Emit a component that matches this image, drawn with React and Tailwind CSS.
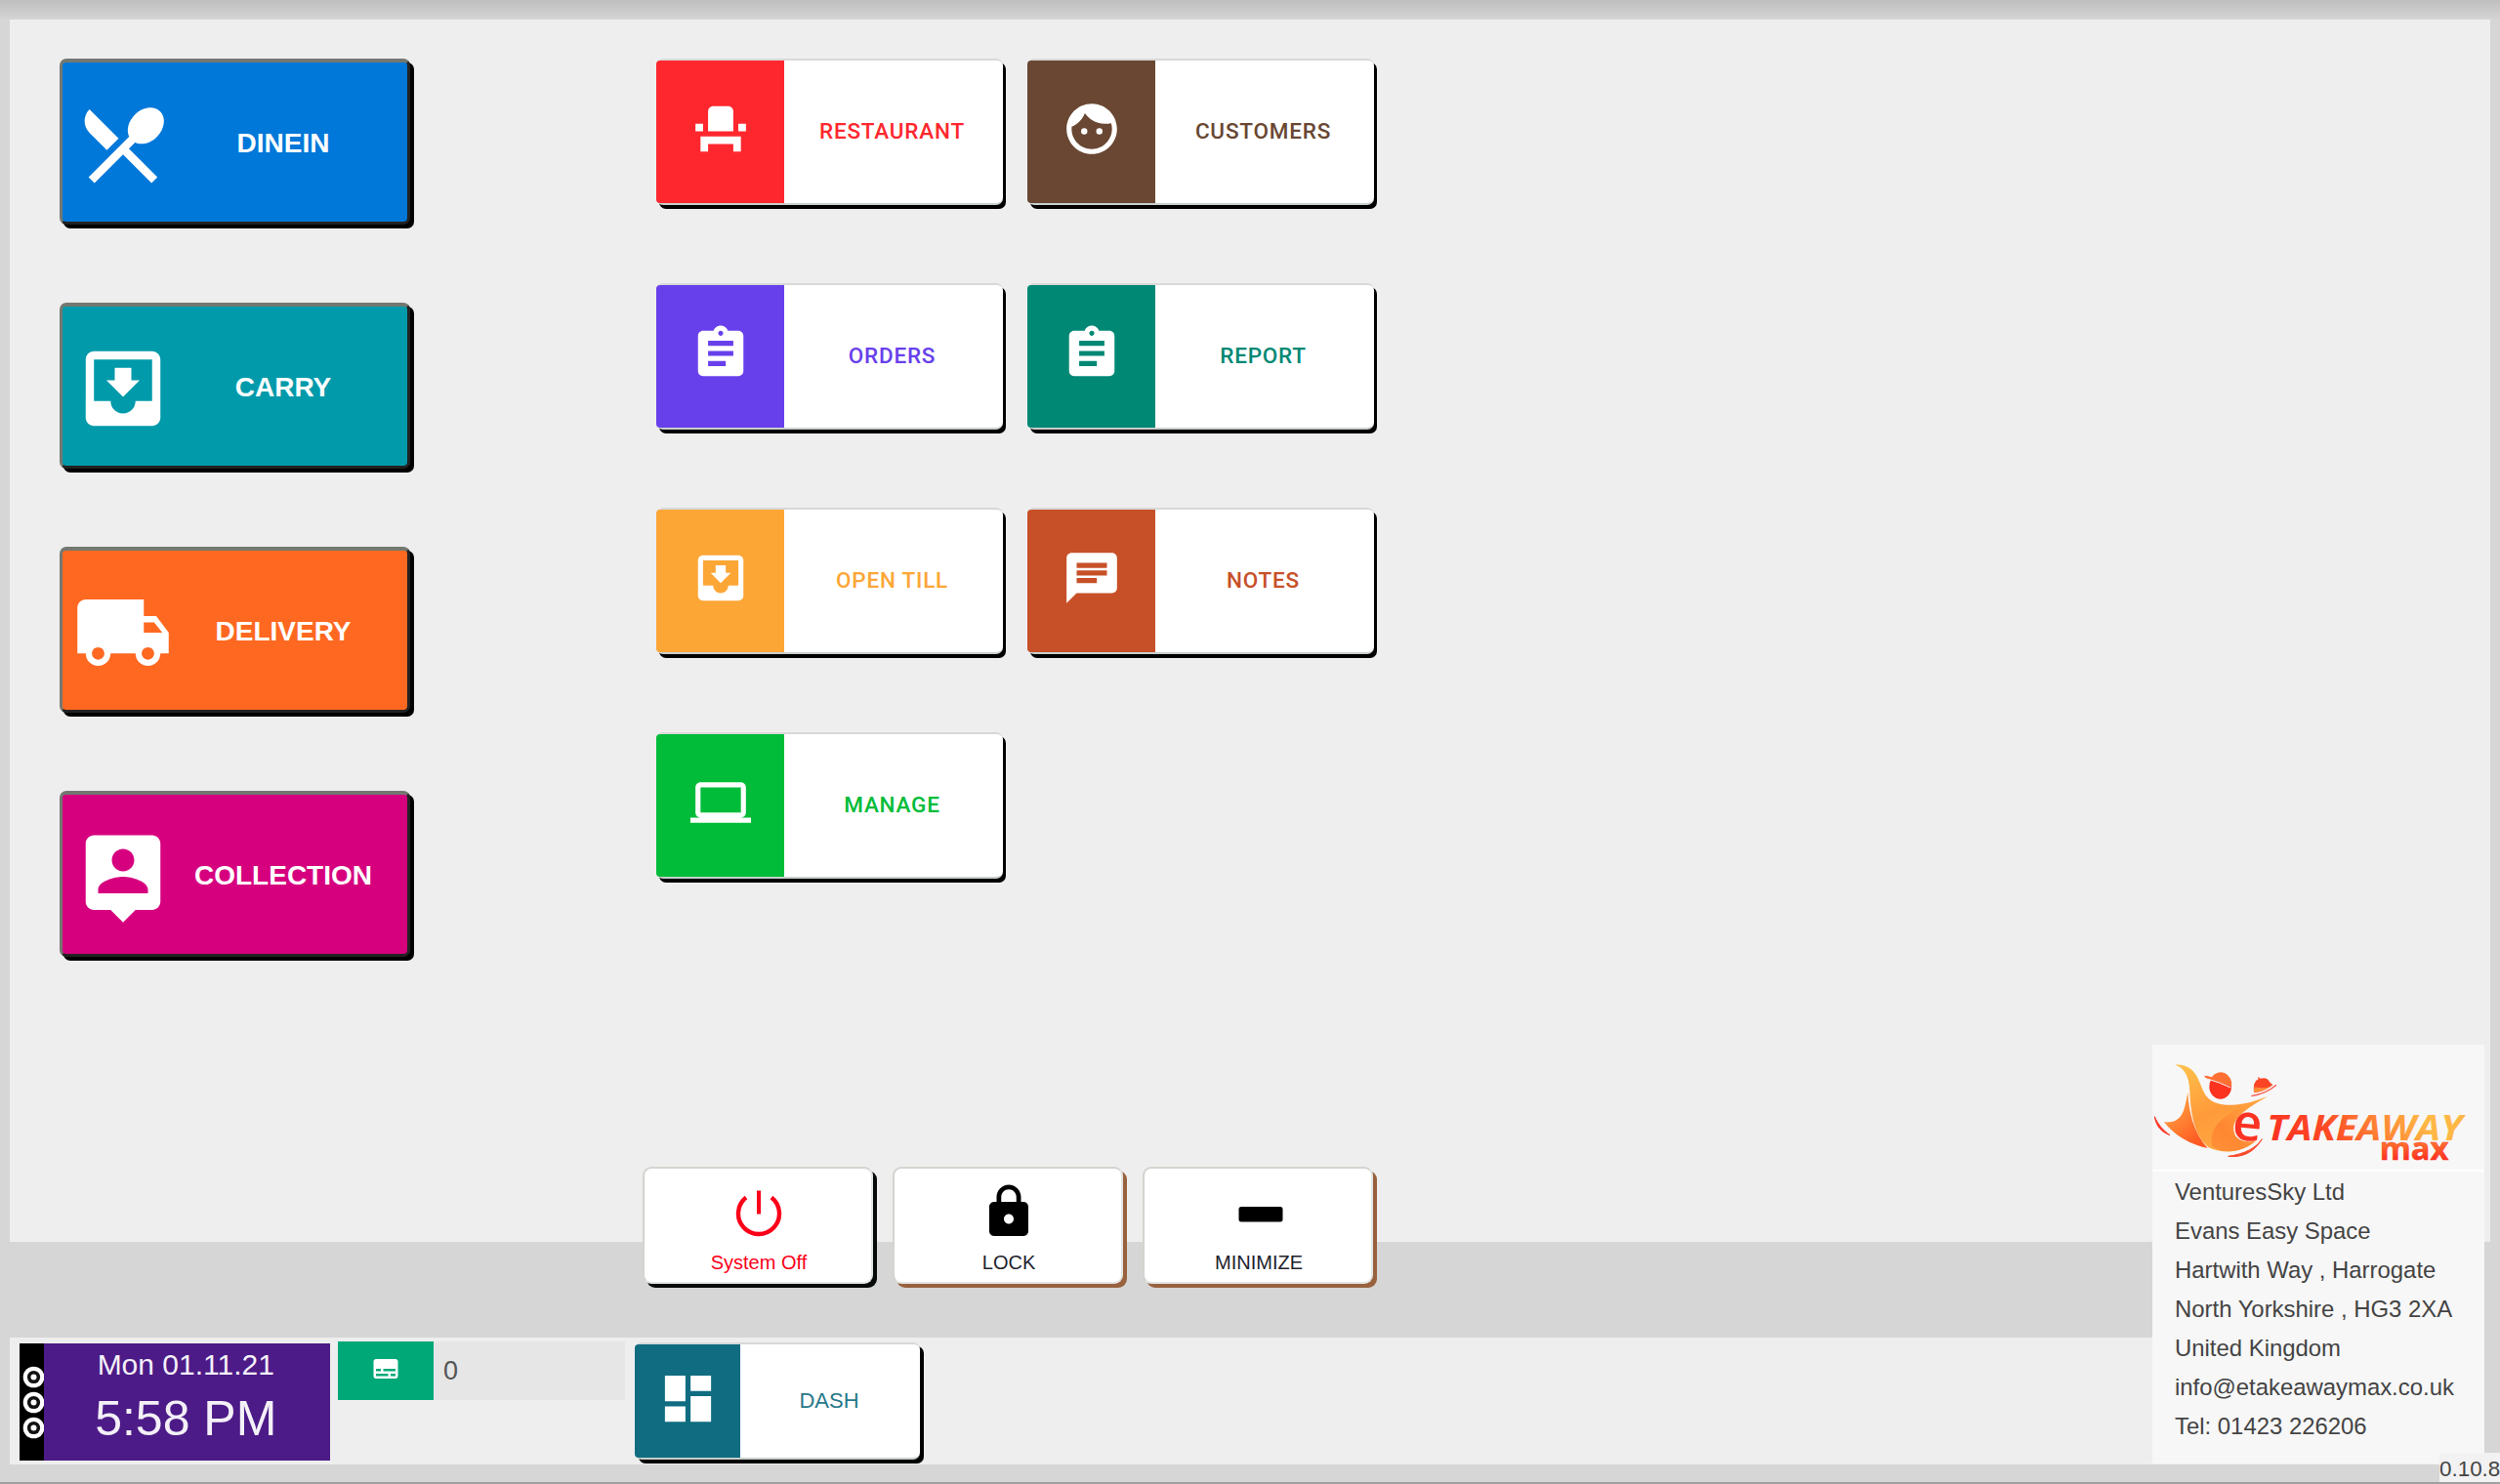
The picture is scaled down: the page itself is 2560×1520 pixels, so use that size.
import {
  MdRestaurantMenu, MdMoveToInbox, MdLocalShipping, MdEventSeat, MdFace, MdAssignment, MdChat, MdLaptop, MdLock, MdDashboard, MdSubtitles,
} from "react-icons/md";

function PersonPin({ className }) {
  return (
    <svg viewBox="0 0 24 24" fill="currentColor" className={className}>
      <path d="M19 2H5c-1.11 0-2 .9-2 2v14c0 1.1.89 2 2 2h4l3 3 3-3h4c1.1 0 2-.9 2-2V4c0-1.1-.9-2-2-2zm-7 3.3c1.49 0 2.7 1.21 2.7 2.7s-1.21 2.7-2.7 2.7S9.3 9.49 9.3 8s1.21-2.7 2.7-2.7zM18 16H6v-.9c0-2 4-3.1 6-3.1s6 1.1 6 3.1v.9z" />
    </svg>
  );
}

function PowerIcon() {
  return (
    <svg viewBox="0 0 60 60" className="size-[60px]" fill="none" stroke="currentColor" strokeWidth="4.4">
      <path d="M17 15.5A21 21 0 1 0 43 15.5" />
      <path d="M30 8.5V32.5" strokeWidth="4" />
    </svg>
  );
}

function BarIcon() {
  return (
    <svg viewBox="0 0 60 60" className="size-[60px]" fill="currentColor">
      <rect x="9.5" y="25" width="45" height="15.5" rx="2.5" />
    </svg>
  );
}

const orderTypes = [
  { label: "DINEIN", Icon: MdRestaurantMenu, bg: "bg-[#0078d9]" },
  { label: "CARRY", Icon: MdMoveToInbox, bg: "bg-[#009aab]" },
  { label: "DELIVERY", Icon: MdLocalShipping, bg: "bg-[#ff6820]" },
  { label: "COLLECTION", Icon: PersonPin, bg: "bg-[#d6007f]" },
];

const tiles = [
  { label: "RESTAURANT", Icon: MdEventSeat, bg: "bg-[#ff272e]", text: "text-[#ff272e]" },
  { label: "CUSTOMERS", Icon: MdFace, bg: "bg-[#694732]", text: "text-[#694732]" },
  { label: "ORDERS", Icon: MdAssignment, bg: "bg-[#6840eb]", text: "text-[#6840eb]" },
  { label: "REPORT", Icon: MdAssignment, bg: "bg-[#008874]", text: "text-[#008874]" },
  { label: "OPEN TILL", Icon: MdMoveToInbox, bg: "bg-[#fca636]", text: "text-[#fca636]" },
  { label: "NOTES", Icon: MdChat, bg: "bg-[#c75028]", text: "text-[#c75028]" },
  { label: "MANAGE", Icon: MdLaptop, bg: "bg-[#00bc39]", text: "text-[#00bc39]" },
];

const systemActions = [
  { label: "System Off", icon: <PowerIcon />, text: "text-[#fb0019]", labelColor: "text-[#fb0019]", shadow: "shadow-[4px_4px_0_#060a08]" },
  { label: "LOCK", icon: <MdLock className="size-[60px]" />, text: "text-black", labelColor: "text-[#22222c]", shadow: "shadow-[4px_4px_0_#99623f]" },
  { label: "MINIMIZE", icon: <BarIcon />, text: "text-black", labelColor: "text-[#22222c]", shadow: "shadow-[4px_4px_0_#99623f]" },
];

const address = [
  "VenturesSky Ltd",
  "Evans Easy Space",
  "Hartwith Way , Harrogate",
  "North Yorkshire , HG3 2XA",
  "United Kingdom",
  "info@etakeawaymax.co.uk",
  "Tel: 01423 226206",
];

function OrderButton({ label, Icon, bg }) {
  return (
    <button className={`flex h-[170px] w-[359px] items-center rounded-[7px] border-[3px] border-t-4 border-t-[#737871] border-l-[#737871] border-r-[#222] border-b-[#222] pt-[2px] text-white shadow-[4px_4px_0_#000] ${bg}`}>
      <span className="flex w-[123px] shrink-0 justify-center pt-[2px]">
        <Icon className="size-[102px]" />
      </span>
      <span className="w-[206px] text-center text-[28px] leading-none font-bold">{label}</span>
    </button>
  );
}

function Tile({ label, Icon, bg, text }) {
  return (
    <button className="flex h-[150px] w-[355px] rounded-[7px] border-t-2 border-b-2 border-t-[#d8d8d8] border-b-[#c9cfcc] bg-white shadow-[3px_4px_0_#000]">
      <span className={`flex h-full w-[131px] items-center justify-center rounded-l-[4px] text-white ${bg}`}>
        <Icon className="relative -top-[3px] size-[62px]" />
      </span>
      <span className={`flex flex-1 items-center justify-center self-stretch pr-[3px] font-['Roboto'] text-[22.5px] font-medium tracking-[0.035em] ${text}`}>{label}</span>
    </button>
  );
}

function Logo() {
  return (
    <svg viewBox="72 60 1020 384" className="h-[128px] w-[340px] shrink-0">
      <defs>
        <linearGradient id="body" x1="0.1" y1="0" x2="0.6" y2="1">
          <stop offset="0" stopColor="#ffc04a" />
          <stop offset="0.55" stopColor="#ff9a3a" />
          <stop offset="1" stopColor="#ffab42" />
        </linearGradient>
        <linearGradient id="fold" x1="1" y1="0" x2="0" y2="1">
          <stop offset="0" stopColor="#ffb347" />
          <stop offset="0.7" stopColor="#ff7d2e" />
          <stop offset="1" stopColor="#ff8b35" />
        </linearGradient>
        <linearGradient id="leg" x1="0" y1="0" x2="0.6" y2="1">
          <stop offset="0" stopColor="#ffb347" />
          <stop offset="1" stopColor="#ff5a22" />
        </linearGradient>
        <linearGradient id="word" gradientUnits="userSpaceOnUse" x1="480" y1="400" x2="860" y2="200">
          <stop offset="0" stopColor="#fb3322" />
          <stop offset="0.35" stopColor="#fd4a25" />
          <stop offset="1" stopColor="#ffb845" />
        </linearGradient>
        <linearGradient id="max" x1="0" y1="0" x2="0" y2="1">
          <stop offset="0.35" stopColor="#ff7530" />
          <stop offset="0.8" stopColor="#fb2c1f" />
        </linearGradient>
      </defs>
      <path d="M181 206C170 260 168 302 108 298C140 340 190 368 242 378C200 330 184 270 181 206Z" fill="url(#leg)" />
      <path d="M142 122C215 118 215 190 238 218C262 250 330 258 425 220C350 262 318 290 322 325C326 352 350 362 388 357C345 394 285 396 245 376C200 340 190 270 187 205C186 160 172 132 142 122Z" fill="url(#body)" />
      <path d="M425 220C340 262 316 290 322 325C326 352 350 362 388 357C345 394 285 396 256 372C240 310 300 262 425 220Z" fill="url(#fold)" opacity="0.75" />
      <ellipse cx="281" cy="189" rx="34" ry="38" fill="#fb331f" />
      <path d="M232 155Q246 156 254 160A34 36 0 0 1 315 188Q275 176 235 164Z" fill="#ff7034" />
      <path d="M234 163Q280 176 313 192" stroke="#f7f7f7" strokeWidth="3" fill="none" />
      <path d="M384 208Q380 172 398 166L396 158L404 164Q425 158 432 175L442 184Q415 204 384 208Z" fill="#fb4425" />
      <path d="M384 208Q383 196 386 190Q412 196 436 188Q415 204 384 208Z" fill="#ff8a36" />
      <path d="M376 218Q420 212 453 184" stroke="#fb5a50" strokeWidth="4" fill="none" />
      <path d="M79 281C84 312 100 328 126 338C104 322 90 306 79 281Z" fill="#fb3a2a" stroke="#fb3a2a" strokeWidth="3" />
      <path d="M305 403C350 408 385 390 409 350C390 378 355 396 305 403Z" fill="#fb4a2c" stroke="#fb4a2c" strokeWidth="3" />
      <text x="318" y="354" transform="rotate(5 362 315)" fontFamily="Open Sans, sans-serif" fontWeight="600" fontSize="156" textLength="90" lengthAdjust="spacingAndGlyphs" fill="url(#word)">e</text>
      <text x="424" y="355" fontFamily="Open Sans, sans-serif" fontWeight="700" fontStyle="italic" fontSize="105" textLength="600" lengthAdjust="spacingAndGlyphs" fill="url(#word)">TAKEAWAY</text>
      <text x="770" y="414" fontFamily="Open Sans, sans-serif" fontWeight="700" fontSize="94" textLength="212" lengthAdjust="spacingAndGlyphs" fill="url(#max)" stroke="#fb3d24" strokeWidth="1.5">max</text>
    </svg>
  );
}

function Clock() {
  return (
    <div className="flex h-[120px] w-[318px] bg-[#4c1b87] text-[#f4f0f8]">
      <div className="w-[24.5px] bg-black">
        <svg viewBox="0 0 24.5 120" className="h-[120px] w-[24.5px]">
          {[34.5, 60.5, 86.5].map((cy) => (
            <g key={cy}>
              <circle cx="14.5" cy={cy} r="10.8" fill="#fff" />
              <circle cx="14.5" cy={cy} r="6.6" fill="#111" />
              <circle cx="14.5" cy={cy} r="3" fill="#fff" />
            </g>
          ))}
        </svg>
      </div>
      <div className="flex flex-1 flex-col items-center pr-[2px]">
        <div className="mt-[4px] text-[30px] leading-[36px]">Mon 01.11.21</div>
        <div className="mt-[7px] text-[50px] leading-[60px]">5:58 PM</div>
      </div>
    </div>
  );
}

export default function App() {
  return (
    <div className="relative flex h-[1520px] w-[2560px] flex-col overflow-hidden border-b-2 border-[#a0a0a0] bg-[#d6d6d6] font-['Liberation_Sans',Arial,sans-serif]">
      <div className="h-5 shrink-0 bg-linear-to-b from-[#bfbfbf] to-[#d5d5d5]" />
      <main className="ml-[10px] flex h-[1252px] w-[2540px] shrink-0 bg-[#eeeeee] pt-10">
        <div className="ml-[51px] flex w-[611px] flex-col gap-20">
          {orderTypes.map((item) => <OrderButton key={item.label} {...item} />)}
        </div>
        <div className="grid auto-rows-[150px] grid-cols-[355px_355px] content-start gap-x-[25px] gap-y-20">
          {tiles.map((item) => <Tile key={item.label} {...item} />)}
        </div>
      </main>
      <footer className="mt-[98px] ml-[10px] flex h-[130px] w-[2534px] shrink-0 items-start bg-[#eeeeee]">
        <div className="mt-[6px] ml-[10px]"><Clock /></div>
        <div className="mt-1 ml-2 flex h-[60px] w-[294px] bg-[#e6e6e6]">
          <div className="flex w-[98px] items-center justify-center bg-[#00a878] text-white">
            <MdSubtitles className="relative -top-[2px] size-[30px]" />
          </div>
          <div className="pl-[10px] text-[27px] leading-[61px] text-[#555]">0</div>
        </div>
        <button className="mt-[5px] ml-[10px] flex h-[120px] w-[292px] rounded-[7px] border-t-2 border-b-2 border-t-[#d8d8d8] border-b-[#c9cfcc] bg-white shadow-[4px_4px_0_#000]">
          <span className="flex h-full w-[108px] items-center justify-center rounded-l-[4px] bg-[#0f6c81] text-white">
            <MdDashboard className="relative -top-[3px] size-[63px]" />
          </span>
          <span className="flex flex-1 items-center justify-center self-stretch pr-[2px] pb-[2px] text-[22px] text-[#28788a]">DASH</span>
        </button>
      </footer>

      <div className="absolute top-[1195px] left-[658px] flex gap-[20px]">
        {systemActions.map(({ label, icon, text, labelColor, shadow }) => (
          <button key={label} className={`flex h-[120px] w-[236px] flex-col items-center rounded-[9px] border-2 border-[#d3d4cf] border-b-[#e4e6e4] border-r-[#e4e6e4] bg-white pt-[14px] pl-[2px] ${text} ${shadow}`}>
            {icon}
            <span className={`mt-[10px] text-[20px] leading-6 ${labelColor}`}>{label}</span>
          </button>
        ))}
      </div>

      <aside className="absolute top-[1070px] left-[2204px] flex h-[429px] w-[340px] flex-col bg-[#f7f7f7]">
        <Logo />
        <div className="h-[2px] shrink-0 bg-white" />
        <div className="pt-[1px] pl-[23px] text-[23.9px] leading-[40px] whitespace-nowrap text-[#444]">
          {address.map((line) => <div key={line}>{line}</div>)}
        </div>
      </aside>
      <div className="absolute right-0 bottom-[-2px] h-8 w-[62px] bg-[#f2f2f2] text-[22.4px] leading-[34px] whitespace-nowrap text-[#444]">0.10.8</div>
    </div>
  );
}
